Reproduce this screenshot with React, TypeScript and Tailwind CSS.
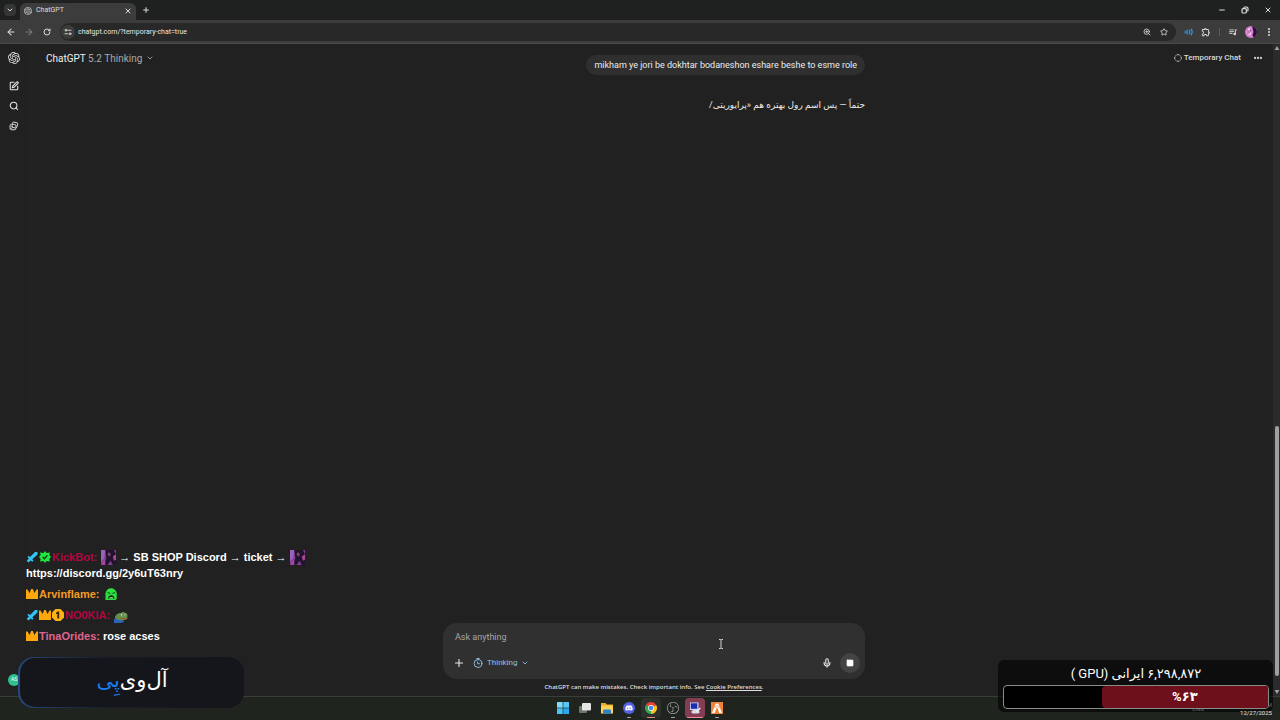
import React from 'react';
import {
  ArrowLeft,
  ArrowRight,
  ChevronDown,
  CircleDashed,
  Ellipsis,
  EllipsisVertical,
  Mic,
  Minus,
  Plus,
  RotateCw,
  Search,
  Square,
  SquarePen,
  Star,
  X,
  ZoomIn,
} from 'lucide-react';
import { SiOpenai, SiObsstudio } from 'react-icons/si';
import { FaDiscord } from 'react-icons/fa';
import { MdOutlineExtension, MdQueueMusic } from 'react-icons/md';

type IconProps = { className?: string };

const SiteSettingsIcon = ({ className }: IconProps) => (
  <svg viewBox="0 0 16 16" className={className} fill="none" stroke="currentColor" strokeWidth="1.8" strokeLinecap="round">
    <circle cx="4" cy="4.5" r="1.9" />
    <path d="M9 4.5h5M2 11.5h5" />
    <circle cx="12" cy="11.5" r="1.9" />
  </svg>
);

const ImagesIcon = ({ className }: IconProps) => (
  <svg viewBox="0 0 24 24" className={className} fill="none" stroke="currentColor" strokeWidth="2.2" strokeLinejoin="round">
    <path d="M8 7l1-3.2a2 2 0 0 1 2.3-1.3l8 1.8a2 2 0 0 1 1.5 2.4l-1.8 7.8a2 2 0 0 1-2.2 1.5" />
    <rect x="2.5" y="8" width="14" height="13" rx="3.5" />
    <circle cx="7.5" cy="12.5" r="1.3" />
    <path d="M4 19.5c3-5 7-5 11.5-2" />
  </svg>
);

const RestoreIcon = ({ className }: IconProps) => (
  <svg viewBox="0 0 12 12" className={className} fill="none" stroke="currentColor" strokeWidth="1.8">
    <rect x="1.5" y="4" width="6.5" height="6.5" rx="1.5" />
    <path d="M4 2.5c.4-.8 1-1 2-1h2a2.5 2.5 0 0 1 2.5 2.5v2c0 1-.3 1.6-1 2" />
  </svg>
);

const SoundIcon = ({ className }: IconProps) => (
  <svg viewBox="0 0 16 16" className={className} fill="none" stroke="currentColor" strokeWidth="2" strokeLinecap="round">
    <path d="M2 6.5v3M5 5v6" />
    <path d="M8.5 5c1.3 1.8 1.3 4.2 0 6M11.5 3.500c2 2.800 2 6.200 0 9" />
  </svg>
);

const ThinkingIcon = ({ className }: IconProps) => (
  <svg viewBox="0 0 20 20" className={className} fill="none" stroke="currentColor" strokeWidth="1.9" strokeLinecap="round">
    <circle cx="10" cy="11" r="7.8" />
    <path d="M7.5 1.2h5M10 1.2v2M9.5 8v3.5h3.5" />
  </svg>
);

const ProfileAvatar = () => (
  <svg viewBox="0 0 12 12" className="size-3 rounded-full">
    <rect width="12" height="12" fill="#d77fd3" />
    <path d="M7 0h5v12H9l-1.5-3 1-3z" fill="#241039" />
    <path d="M3 2.5c1.5-1.5 3-.5 3 1.5v5c-1.5 1-3 0-3-1.5z" fill="#f2bde9" />
    <path d="M4 4.5v3M5.5 3.5v2" stroke="#8b398c" />
  </svg>
);

const SwordBadge = () => (
  <svg viewBox="0 0 12 12" className="size-3 shrink-0" fill="#31c4f5">
    <path d="M11.5 1v2.500L6.3 8.200l1.200 1.300-1.200 1.200-1.500-1.300-2.300 2.100L.7 9.700l2.200-2.200-1.500-1.600 1.200-1.200 1.500 1.200L9 1z" />
  </svg>
);

const VerifiedBadge = () => (
  <svg viewBox="0 0 12 12" className="size-3 shrink-0">
    <path
      d="M4.5 2L6 0l1.500 2 3.500-.5L10.300 4 12 6l-1.700 2 .7 2.500L7.500 10 6 12l-1.500-2-3.500.5L1.700 8 0 6l1.700-2L1 1.500z"
      fill="#1dea3b"
    />
    <path d="M3.7 6l1.7 1.7 3-3.3" fill="none" stroke="#17351c" strokeWidth="1.4" />
  </svg>
);

const CrownBadge = () => (
  <svg viewBox="0 0 12 12" className="size-3 shrink-0" fill="#fda70d">
    <path d="M0 1.5h1.500L3.500 5 5.200 1h1.600l1.700 4 2-3.500H12V11H0z" />
  </svg>
);

const FirstBadge = () => (
  <svg viewBox="0 0 12 12" className="size-3 shrink-0">
    <path d="M3.5 0h5L12 3.5v5L8.5 12h-5L0 8.5v-5z" fill="#fdb316" />
    <path d="M5.5 2.5h1.700v7H5.300V5H4V3.700c.8 0 1.300-.4 1.500-1.200z" fill="#3b2707" />
  </svg>
);

const DancerEmote = () => (
  <svg viewBox="0 0 14 14" className="size-[15px] shrink-0">
    <rect width="14" height="14" fill="#7a3f96" />
    <path d="M0 0h4L3 8l-3 3z" fill="#9a62b8" />
    <path d="M4 0h8l2 4v10h-3l-2-4-3 4H2l3-6z" fill="#22122d" />
    <path d="M6.5 2.5h2l.7 2.200-1.400 1.300L6.300 4.700z" fill="#7d4763" />
    <path d="M11 6l3-2v5l-2 1zM1 11l3-2v5H1z" fill="#a8479a" />
  </svg>
);

const GreenEmote = () => (
  <svg viewBox="0 0 12 12" className="size-3 shrink-0">
    <path d="M.5 12V5.500C1 2 3.300.3 6 .3s5.300 2 5.700 5V11l-1.500 1z" fill="#2ddf3c" />
    <path d="M2.500 4.500l3 1M10 4.500l-2.500 1" stroke="#0d5b1b" strokeWidth="1.3" />
    <path d="M3 10.500c.3-4.500 6-4.500 6.500 0z" fill="#07280d" />
    <path d="M4.500 9.800h3.500" stroke="#c9f5cb" />
  </svg>
);

const FrogEmote = () => (
  <svg viewBox="0 0 14 12" className="mt-1 h-3 w-3.5 shrink-0">
    <path d="M0 8c4-1 9-.5 10 3l-3 1H0z" fill="#2b63b8" />
    <path d="M1 7c0-3 3-5 6-5 1-1.500 3-1.300 4-.3 1.500 0 2.500 1 2.500 3L13 8c-2 1.700-9 2-12-1z" fill="#62914a" />
    <path d="M5.500 7.500c3 .6 5 .5 8 0" stroke="#a4603c" strokeWidth="1.2" />
    <circle cx="8" cy="4" r="1.2" fill="#cfdcbc" />
    <circle cx="11.5" cy="4" r="1" fill="#cfdcbc" />
    <circle cx="8.3" cy="4" r=".6" />
    <circle cx="11.8" cy="4" r=".6" />
  </svg>
);

const WindowsIcon = () => (
  <svg viewBox="0 0 12 12" className="size-3">
    <path d="M0 0h5.7v5.7H0z" fill="#7bdcff" />
    <path d="M6.3 0H12v5.700H6.300z" fill="#55c8f8" />
    <path d="M0 6.300h5.700V12H0z" fill="#4cc3f7" />
    <path d="M6.300 6.300H12V12H6.300z" fill="#29aaf0" />
  </svg>
);

const TaskViewIcon = () => (
  <svg viewBox="0 0 12 12" className="size-3">
    <rect y="4" width="8" height="7" rx="1" fill="#6f716f" />
    <rect x="3" y="1" width="9" height="7.5" rx="1" fill="#e4e4e4" />
  </svg>
);

const FolderIcon = () => (
  <svg viewBox="0 0 12 12" className="size-3">
    <path d="M0 1h4.500L6 2.500h6v8H0z" fill="#e9a92b" />
    <path d="M0 3.500h12v8H0z" fill="#fdd455" />
    <path d="M2 11.500V9c0-1 .7-1.500 1.500-1.500h5c.8 0 1.500.5 1.500 1.500v2.500z" fill="#2683cd" />
  </svg>
);

const DiscordIcon = () => (
  <span className="flex size-3 items-center justify-center rounded-full bg-[#5562e8] text-white">
    <FaDiscord className="size-2" />
  </span>
);

const ChromeIcon = () => (
  <svg viewBox="0 0 24 24" className="size-3">
    <path d="M12 12L1.600 6A12 12 0 0 1 22.400 6z" fill="#ea4335" />
    <path d="M12 12L22.400 6A12 12 0 0 1 12 24z" fill="#fbc116" />
    <path d="M12 12v12A12 12 0 0 1 1.600 6z" fill="#34a853" />
    <circle cx="12" cy="12" r="5.8" fill="#fff" />
    <circle cx="12" cy="12" r="4.5" fill="#4285f4" />
  </svg>
);

const RemoteIcon = () => (
  <svg viewBox="0 0 12 12" className="size-3">
    <rect x="1" y=".5" width="8.5" height="7.5" fill="#cfd8ee" />
    <rect x="1.8" y="1.3" width="6.5" height="5.5" fill="#1c2db4" />
    <path d="M2 10l2-2h4.500l2.500 2-1.500 1.500H3.500z" fill="#d9dbe6" />
    <path d="M7 9l4-3.500.8 1L8.500 10z" fill="#f1f1f1" />
  </svg>
);

const FiveMIcon = () => (
  <svg viewBox="0 0 12 12" className="size-3">
    <rect width="12" height="12" fill="#f08337" />
    <path d="M4.800 1.500h2.400L11 11H8.300L6 5l-2.300 6H1z" fill="#fff" />
    <path d="M3.500 6L6 3.500 8.500 6" stroke="#f08337" strokeWidth=".8" fill="none" />
  </svg>
);

const taskbarApps = [
  { name: 'Start', icon: <WindowsIcon />, button: '', mark: '' },
  { name: 'Task view', icon: <TaskViewIcon />, button: '', mark: '' },
  { name: 'File Explorer', icon: <FolderIcon />, button: '', mark: '' },
  { name: 'Discord', icon: <DiscordIcon />, button: '', mark: 'w-1 bg-[#a5a5a5]' },
  { name: 'Chrome', icon: <ChromeIcon />, button: 'bg-[#2d302c]', mark: 'w-2 bg-[#e58a84]' },
  { name: 'OBS Studio', icon: <SiObsstudio className="size-3 text-[#c4c4c4]" />, button: '', mark: 'w-1 bg-[#a5a5a5]' },
  { name: 'Remote Desktop', icon: <RemoteIcon />, button: 'bg-[#843d53]', mark: 'w-4 bg-[#f08c9c]' },
  { name: 'FiveM', icon: <FiveMIcon />, button: '', mark: 'w-1 bg-[#a5a5a5]' },
];

const BrowserChrome = () => (
  <header className="shrink-0 text-[#dcdcdc]">
    <div className="flex h-5 items-stretch bg-[#1f2120]">
      <button aria-label="Search tabs" className="my-1 ml-1 flex w-3 items-center justify-center rounded bg-[#343534]">
        <ChevronDown className="size-2" strokeWidth={3} />
      </button>
      <div className="mt-[3px] ml-1 flex w-[116px] items-center gap-1 rounded-t-md bg-[#3c3c3c] px-1 pb-0.5">
        <SiOpenai className="size-2" />
        <span className="flex-1 text-[7px]">ChatGPT</span>
        <button aria-label="Close tab">
          <X className="size-2" strokeWidth={3} />
        </button>
      </div>
      <button aria-label="New tab" className="ml-1.5">
        <Plus className="size-2" strokeWidth={3} />
      </button>
      <div className="ml-auto flex items-center gap-[15px] pr-2">
        <button aria-label="Minimize"><Minus className="size-2" strokeWidth={3} /></button>
        <button aria-label="Restore"><RestoreIcon className="size-2" /></button>
        <button aria-label="Close"><X className="size-2" strokeWidth={3} /></button>
      </div>
    </div>
    <div className="flex h-6 items-center border-b border-[#4a4a4a] bg-[#3c3c3c] px-1.5">
      <div className="flex items-center gap-2">
        <button aria-label="Back"><ArrowLeft className="size-2.5" strokeWidth={2.5} /></button>
        <button aria-label="Forward"><ArrowRight className="size-2.5 text-[#7c7c7c]" strokeWidth={2.5} /></button>
        <button aria-label="Reload"><RotateCw className="size-2.5 p-px" strokeWidth={3} /></button>
      </div>
      <div className="ml-2 flex h-[18px] flex-1 items-center gap-[3px] rounded-full bg-[#282828] pl-px pr-2">
        <button aria-label="Site information" className="flex size-3.5 items-center justify-center rounded-full bg-[#3c3c3c]">
          <SiteSettingsIcon className="size-2" />
        </button>
        <input
          aria-label="Address"
          defaultValue="chatgpt.com/?temporary-chat=true"
          className="min-w-0 flex-1 bg-transparent pt-px text-[7px] text-[#e6e6e6] outline-none"
        />
        <button aria-label="Zoom"><ZoomIn className="size-2" strokeWidth={2.5} /></button>
        <button aria-label="Bookmark" className="ml-1.5"><Star className="size-2" strokeWidth={2.5} /></button>
      </div>
      <div className="flex items-center gap-[7px] pl-2">
        <button aria-label="Sound"><SoundIcon className="size-2.5 text-[#2b95e3]" /></button>
        <button aria-label="Extensions"><MdOutlineExtension className="size-2.5" /></button>
        <span className="mx-px h-2 w-px bg-[#5b5b5b]" />
        <button aria-label="Media"><MdQueueMusic className="size-2.5" /></button>
        <button aria-label="Profile"><ProfileAvatar /></button>
        <button aria-label="Menu"><EllipsisVertical className="size-2.5" strokeWidth={3} /></button>
      </div>
    </div>
  </header>
);

const Rail = () => (
  <nav className="flex w-[31px] shrink-0 flex-col items-center border-r border-[#252525] pr-0.5 pt-2 pb-2.5 text-[#e8e8e8]">
    <a href="#home" aria-label="ChatGPT"><SiOpenai className="size-3" /></a>
    <div className="mt-[17px] flex flex-col items-center gap-2.5">
      <a href="#new" aria-label="New chat"><SquarePen className="size-2.5" strokeWidth={2.5} /></a>
      <a href="#search" aria-label="Search"><Search className="size-2.5" strokeWidth={2.5} /></a>
      <a href="#images" aria-label="Images"><ImagesIcon className="size-2.5" /></a>
    </div>
    <span className="mt-auto flex size-3 items-center justify-center rounded-full bg-[#2fc08e] text-[5px] text-white">AS</span>
  </nav>
);

const Composer = () => (
  <form className="flex flex-col rounded-[14px] bg-[#303030] px-3 pt-1.5 pb-1.5" onSubmit={(e) => e.preventDefault()}>
    <textarea
      aria-label="Message"
      placeholder="Ask anything"
      rows={1}
      className="h-[18px] w-full resize-none bg-transparent text-[9px] leading-4 text-white outline-none placeholder:text-[#a5a5a5]"
    />
    <div className="mt-1.5 flex h-5 items-center">
      <button type="button" aria-label="Add" className="-ml-0.5">
        <Plus className="size-3 text-[#e8e8e8]" strokeWidth={2.2} />
      </button>
      <button type="button" className="ml-2 flex items-center gap-1 text-[8px] text-[#8fc1e8]">
        <ThinkingIcon className="size-2.5" />
        Thinking
        <ChevronDown className="size-2" strokeWidth={2.5} />
      </button>
      <button type="button" aria-label="Dictate" className="ml-auto">
        <Mic className="size-2.5 text-[#e8e8e8]" strokeWidth={2.5} />
      </button>
      <button type="button" aria-label="Stop" className="ml-2 -mr-[7px] flex size-5 items-center justify-center rounded-full bg-[#434343]">
        <Square className="size-2 fill-white text-white" />
      </button>
    </div>
  </form>
);

const Scrollbar = () => (
  <div className="flex w-[7px] shrink-0 flex-col items-center bg-[#2b2b2b] py-0.5 text-[#9f9f9f]">
    <svg viewBox="0 0 6 5" className="h-1 w-1.5" fill="currentColor"><path d="M3 0l3 5H0z" /></svg>
    <div className="flex w-1 flex-1 flex-col justify-end pb-3.5">
      <div className="h-[40%] rounded-full bg-[#9f9f9f]" />
    </div>
    <svg viewBox="0 0 6 5" className="h-1 w-1.5" fill="currentColor"><path d="M3 5l3-5H0z" /></svg>
  </div>
);

const TextCursor = () => (
  <svg viewBox="0 0 6 10" className="absolute top-4 right-[141px] h-2.5 w-1.5" fill="none" stroke="#d6d6d6">
    <path d="M1 .5h1.500L3 1l.5-.5H5M3 1v8M1 9.500h1.500L3 9l.5.5H5" />
  </svg>
);

const Conversation = () => (
  <main className="flex min-w-0 flex-1 flex-col pl-1">
    <div className="flex h-7 shrink-0 items-center justify-between pl-[11px] pr-2.5">
      <button className="flex items-center gap-1 text-[10px] text-[#a9a9a9]">
        <span><span className="text-[#f0f0f0]">ChatGPT</span> 5.2 Thinking</span>
        <ChevronDown className="size-2" strokeWidth={2.5} />
      </button>
      <div className="flex items-center gap-3 text-[#d9d9d9]">
        <span className="flex items-center gap-0.5 text-[8px] font-medium">
          <CircleDashed className="size-2" strokeWidth={2.5} />
          Temporary Chat
        </span>
        <button aria-label="More"><Ellipsis className="size-2.5" strokeWidth={3.5} /></button>
      </div>
    </div>
    <div className="mx-auto flex w-full max-w-[422px] flex-1 flex-col">
      <p className="-mt-[17px] self-end rounded-[10px] bg-[#2f2f2f] px-2 py-1 text-[9px] leading-3 text-[#ececec]">
        mikham ye jori be dokhtar bodaneshon eshare beshe to esme role
      </p>
      <p dir="rtl" className="mt-6 text-[9px] leading-3 text-[#ececec]">
        حتماً — پس اسم رول بهتره هم «پرایوریتی/
      </p>
      <div className="mt-auto">
        <div className="relative">
          <Composer />
          <TextCursor />
        </div>
        <p className="py-1 text-center font-['Open_Sans',sans-serif] text-[6px] leading-[9px] font-semibold text-[#dedede]">
          ChatGPT can make mistakes. Check important info. See <a href="#cookies" className="underline">Cookie Preferences</a>.
        </p>
      </div>
    </div>
  </main>
);

const Taskbar = () => (
  <footer className="relative flex h-6 shrink-0 items-center justify-center gap-0.5 border-t border-[#3b3d3a] bg-[#20241f] pb-0.5">
    {taskbarApps.map((app) => (
      <button key={app.name} aria-label={app.name} className={`relative flex h-5 w-5 items-center justify-center rounded-sm ${app.button}`}>
        {app.icon}
        {app.mark && <span className={`absolute bottom-0 h-px rounded-full ${app.mark}`} />}
      </button>
    ))}
    <div className="absolute right-2 bottom-[3px] flex items-center gap-5 text-[6px] leading-[8px] text-[#e2e2e2]">
      <span>ENG</span>
      <div className="pl-4 text-right">
        <div>4:38 AM</div>
        {/* the date stays readable below the donation bar */}
        <div className="relative z-10">12/27/2025</div>
      </div>
    </div>
  </footer>
);

const StreamChat = () => (
  <div className="absolute bottom-[76px] left-[26px] flex flex-col gap-[5px] font-['Liberation_Sans',sans-serif] text-[11px] leading-4 font-bold text-white">
    <div>
      <div className="flex h-4 items-center gap-px">
        <SwordBadge />
        <VerifiedBadge />
        <span className="mr-[3px] text-[#b3063f]">KickBot:</span>
        <DancerEmote />
        <span className="mx-0.5">→ SB SHOP Discord → ticket →</span>
        <DancerEmote />
      </div>
      <div>https://discord.gg/2y6uT63nry</div>
    </div>
    <div className="flex items-center gap-px">
      <CrownBadge />
      <span className="mr-1 text-[#f59a23]">Arvinflame:</span>
      <GreenEmote />
    </div>
    <div className="flex h-4 items-center gap-px">
      <SwordBadge />
      <CrownBadge />
      <FirstBadge />
      <span className="mr-[3px] text-[#b3063f]">NO0KIA:</span>
      <FrogEmote />
    </div>
    <div className="flex items-center gap-px">
      <CrownBadge />
      <span className="mr-0.5 text-[#e0648f]">TinaOrides:</span>
      <span>rose acses</span>
    </div>
  </div>
);

const SponsorCard = () => (
  <div className="absolute bottom-3 left-[18px] w-[226px] rounded-2xl bg-gradient-to-r from-[#25497f] via-[#171c27] via-40% to-[#14161b] py-px pl-0.5">
    <div
      dir="rtl"
      className="flex h-[49px] items-center justify-center rounded-[15px] bg-[#14161b] pb-1 font-['DejaVu_Sans',sans-serif] text-[21px] text-white"
    >
      <span>آل‌وی</span>
      <span className="text-[#167cf0]">پِی</span>
    </div>
  </div>
);

const DonationGoal = () => (
  <div className="absolute right-[7px] bottom-2 flex w-[275px] flex-col rounded-md bg-black/60 pt-1 pr-1 pb-[3px] pl-[5px] font-[Roboto,'DejaVu_Sans',sans-serif] text-white">
    <p dir="rtl" className="mb-px text-center text-[13px] leading-5">۶,۲۹۸,۸۷۲ ایرانی (GPU )</p>
    <div className="flex h-6 justify-end overflow-hidden rounded border border-[#8b8b8b] bg-black">
      <div className="flex w-[63%] items-center justify-center rounded-l bg-[#6d101b] text-[13px] font-bold">%۶۳</div>
    </div>
  </div>
);

const App = () => {
  return (
    <div className="relative flex h-screen flex-col overflow-hidden bg-[#212121] font-[Roboto,'DejaVu_Sans',sans-serif]">
      <BrowserChrome />
      <div className="flex min-h-0 flex-1">
        <Rail />
        <Conversation />
        <Scrollbar />
      </div>
      <Taskbar />
      <StreamChat />
      <SponsorCard />
      <DonationGoal />
    </div>
  );
};

export default App;
